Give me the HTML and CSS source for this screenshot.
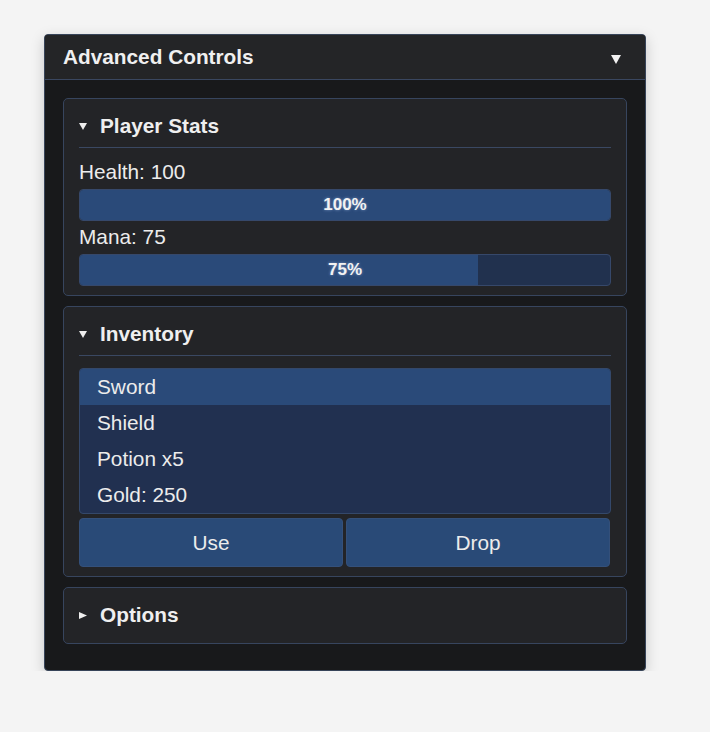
FILE: index.html
```html
<!DOCTYPE html>
<html lang="en">
<head>
<meta charset="utf-8">
<title>Advanced Controls</title>
<link rel="stylesheet" href="styles.css">
</head>
<body>
<div class="panel">
  <div class="panel-header">
    <span class="panel-title">Advanced Controls</span>
    <svg class="panel-caret" width="10" height="9" viewBox="0 0 10 9"><polygon points="0,0 10,0 5,9" fill="#f2f2f2"/></svg>
  </div>
  <div class="panel-body">
    <section class="group">
      <div class="group-header open">
        <svg class="caret" width="8" height="7" viewBox="0 0 8 7"><polygon points="0,0 8,0 4,7" fill="#eeeeee"/></svg>
        <span>Player Stats</span>
      </div>
      <div class="stat-label">Health: 100</div>
      <div class="bar"><div class="bar-fill" style="width:100%"></div><span class="bar-text">100%</span></div>
      <div class="stat-label">Mana: 75</div>
      <div class="bar"><div class="bar-fill" style="width:75%"></div><span class="bar-text">75%</span></div>
    </section>
    <section class="group">
      <div class="group-header open">
        <svg class="caret" width="8" height="7" viewBox="0 0 8 7"><polygon points="0,0 8,0 4,7" fill="#eeeeee"/></svg>
        <span>Inventory</span>
      </div>
      <ul class="inventory">
        <li class="item selected">Sword</li>
        <li class="item">Shield</li>
        <li class="item">Potion x5</li>
        <li class="item">Gold: 250</li>
      </ul>
      <div class="actions">
        <button class="btn">Use</button>
        <button class="btn">Drop</button>
      </div>
    </section>
    <section class="group">
      <div class="group-header closed">
        <svg class="caret caret-right" width="8" height="7" viewBox="0 0 8 7"><polygon points="0,0 8,3.5 0,7" fill="#eeeeee"/></svg>
        <span>Options</span>
      </div>
    </section>
  </div>
</div>
</body>
</html>
```

FILE: styles.css
```css
* { box-sizing: border-box; }

html, body {
  margin: 0;
  padding: 0;
}

body {
  background: #f4f4f4;
  font-family: "Liberation Sans", Arial, sans-serif;
  font-size: 20.8px;
  color: #ececec;
  padding: 34px 0 0 44px;
}

.panel {
  width: 602px;
  background: #18191b;
  border: 1px solid #374459;
  border-radius: 4px;
  box-shadow: 0 4px 14px rgba(0, 0, 0, 0.18);
  overflow: hidden;
}

.panel-header {
  display: flex;
  align-items: center;
  justify-content: space-between;
  background: #242527;
  border-bottom: 1px solid #3a4760;
  padding: 9px 24px 10px 18px;
  height: 45px;
}

.panel-title {
  font-weight: bold;
  line-height: 24px;
  color: #f0f0f0;
}

.panel-caret {
  display: block;
  margin-top: 5px;
}

.panel-body {
  padding: 18px 18px 16px;
}

.group {
  background: #232427;
  border: 1px solid #37455e;
  border-radius: 5px;
  padding: 15px 15px 9px;
  margin-bottom: 10px;
}

.group-header {
  display: flex;
  align-items: center;
  font-weight: bold;
  line-height: 24px;
  color: #efefef;
  padding-bottom: 9px;
}

.group-header.open {
  border-bottom: 1px solid #3a4862;
  margin-bottom: 12px;
}

.group-header.closed {
  padding-bottom: 7px;
}

.caret {
  display: block;
  margin-right: 13px;
  margin-top: 1px;
}

.stat-label {
  line-height: 24px;
  margin-bottom: 5px;
}

.bar {
  position: relative;
  height: 32px;
  background: #21314e;
  border: 1px solid #36486a;
  border-radius: 4px;
  overflow: hidden;
  margin-bottom: 4px;
}

.bar:last-child {
  margin-bottom: 0;
}

.bar-fill {
  height: 100%;
  background: #2a4a79;
}

.bar-text {
  position: absolute;
  inset: 0;
  display: flex;
  align-items: center;
  justify-content: center;
  font-size: 17px;
  font-weight: bold;
  color: #f2f2f2;
  text-shadow: 0 0 3px rgba(170, 195, 240, 0.6);
}

.inventory {
  list-style: none;
  margin: 0;
  padding: 0;
  background: #213050;
  border: 1px solid #34486a;
  border-radius: 4px;
  overflow: hidden;
}

.item {
  height: 36px;
  line-height: 36px;
  padding: 0 17px;
  color: #ececec;
}

.item.selected {
  background: #2a4a79;
}

.actions {
  display: flex;
  gap: 3px;
  padding-right: 1px;
  margin-top: 4px;
}

.btn {
  flex: 1;
  height: 49px;
  background: #294a77;
  border: 1px solid #34507a;
  border-radius: 4px;
  color: #ececec;
  font-family: "Liberation Sans", Arial, sans-serif;
  font-size: 20.8px;
  line-height: 24px;
  padding: 0;
}
```
